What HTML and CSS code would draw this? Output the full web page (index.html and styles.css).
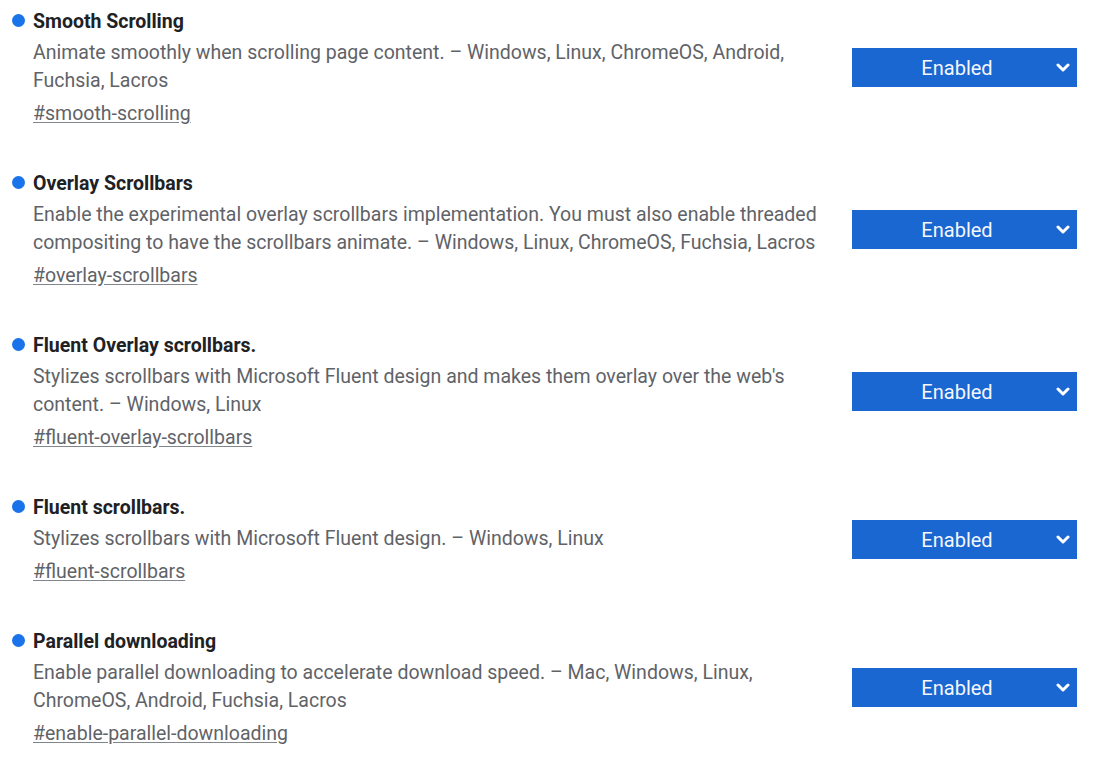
FILE: index.html
```html
<!DOCTYPE html>
<html lang="en">
<head>
<meta charset="utf-8">
<title>Experiments</title>
<link rel="stylesheet" href="styles.css">
</head>
<body>
<div class="list">
  <div class="experiment">
    <span class="dot"></span>
    <div class="text">
      <h3 class="title">Smooth Scrolling</h3>
      <p class="desc">Animate smoothly when scrolling page content. – Windows, Linux, ChromeOS, Android, Fuchsia, Lacros</p>
      <a class="link" href="#smooth-scrolling">#smooth-scrolling</a>
    </div>
    <div class="select"><span class="label">Enabled</span><svg class="chev" viewBox="0 0 14 9" width="14" height="9"><path d="M2 2 L7 7 L12 2" fill="none" stroke="#fff" stroke-width="3" stroke-linecap="round" stroke-linejoin="round"/></svg></div>
  </div>
  <div class="experiment">
    <span class="dot"></span>
    <div class="text">
      <h3 class="title">Overlay Scrollbars</h3>
      <p class="desc">Enable the experimental overlay scrollbars implementation. You must also enable threaded compositing to have the scrollbars animate. – Windows, Linux, ChromeOS, Fuchsia, Lacros</p>
      <a class="link" href="#overlay-scrollbars">#overlay-scrollbars</a>
    </div>
    <div class="select"><span class="label">Enabled</span><svg class="chev" viewBox="0 0 14 9" width="14" height="9"><path d="M2 2 L7 7 L12 2" fill="none" stroke="#fff" stroke-width="3" stroke-linecap="round" stroke-linejoin="round"/></svg></div>
  </div>
  <div class="experiment">
    <span class="dot"></span>
    <div class="text">
      <h3 class="title">Fluent Overlay scrollbars.</h3>
      <p class="desc">Stylizes scrollbars with Microsoft Fluent design and makes them overlay over the web's content. – Windows, Linux</p>
      <a class="link" href="#fluent-overlay-scrollbars">#fluent-overlay-scrollbars</a>
    </div>
    <div class="select"><span class="label">Enabled</span><svg class="chev" viewBox="0 0 14 9" width="14" height="9"><path d="M2 2 L7 7 L12 2" fill="none" stroke="#fff" stroke-width="3" stroke-linecap="round" stroke-linejoin="round"/></svg></div>
  </div>
  <div class="experiment">
    <span class="dot"></span>
    <div class="text">
      <h3 class="title">Fluent scrollbars.</h3>
      <p class="desc">Stylizes scrollbars with Microsoft Fluent design. – Windows, Linux</p>
      <a class="link" href="#fluent-scrollbars">#fluent-scrollbars</a>
    </div>
    <div class="select"><span class="label">Enabled</span><svg class="chev" viewBox="0 0 14 9" width="14" height="9"><path d="M2 2 L7 7 L12 2" fill="none" stroke="#fff" stroke-width="3" stroke-linecap="round" stroke-linejoin="round"/></svg></div>
  </div>
  <div class="experiment">
    <span class="dot"></span>
    <div class="text">
      <h3 class="title">Parallel downloading</h3>
      <p class="desc">Enable parallel downloading to accelerate download speed. – Mac, Windows, Linux, ChromeOS, Android, Fuchsia, Lacros</p>
      <a class="link" href="#enable-parallel-downloading">#enable-parallel-downloading</a>
    </div>
    <div class="select"><span class="label">Enabled</span><svg class="chev" viewBox="0 0 14 9" width="14" height="9"><path d="M2 2 L7 7 L12 2" fill="none" stroke="#fff" stroke-width="3" stroke-linecap="round" stroke-linejoin="round"/></svg></div>
  </div>
</div>
</body>
</html>
```

FILE: styles.css
```css
html, body {
  margin: 0;
  padding: 0;
  background: #ffffff;
}

body {
  font-family: Roboto, "Liberation Sans", Arial, sans-serif;
  font-size: 19.5px;
  color: #5f6368;
}

.list {
  display: flex;
  flex-direction: column;
  gap: 41px;
  padding: 7px 0 0 12px;
}

.experiment {
  display: grid;
  grid-template-columns: 21px 800px 225px;
  column-gap: 0;
  align-items: center;
}

.experiment .select {
  margin-left: 19px;
}

.dot {
  align-self: start;
  margin-top: 7px;
  width: 13px;
  height: 13px;
  border-radius: 50%;
  background: #1a73e8;
}

.text {
  display: flex;
  flex-direction: column;
  align-items: flex-start;
}

.title {
  margin: 0;
  padding-top: 1px;
  font-size: 19.5px;
  line-height: 28px;
  font-weight: 700;
  color: #202124;
}

.desc {
  margin: 3px 0 0 0;
  line-height: 28px;
  color: #5f6368;
}

.link {
  margin-top: 5px;
  line-height: 28px;
  color: #5f6368;
  text-decoration: underline;
  text-decoration-color: #80868b;
  text-underline-offset: 2px;
}

.select {
  box-sizing: border-box;
  width: 225px;
  height: 39px;
  background: #1a67d2;
  color: #ffffff;
  display: flex;
  align-items: center;
  padding: 0 7px 0 8px;
}

.label {
  flex: 1;
  text-align: center;
  font-size: 20px;
  margin-right: 2px;
  color: #f4f7fc;
}

.chev {
  display: block;
  flex: none;
}
```
